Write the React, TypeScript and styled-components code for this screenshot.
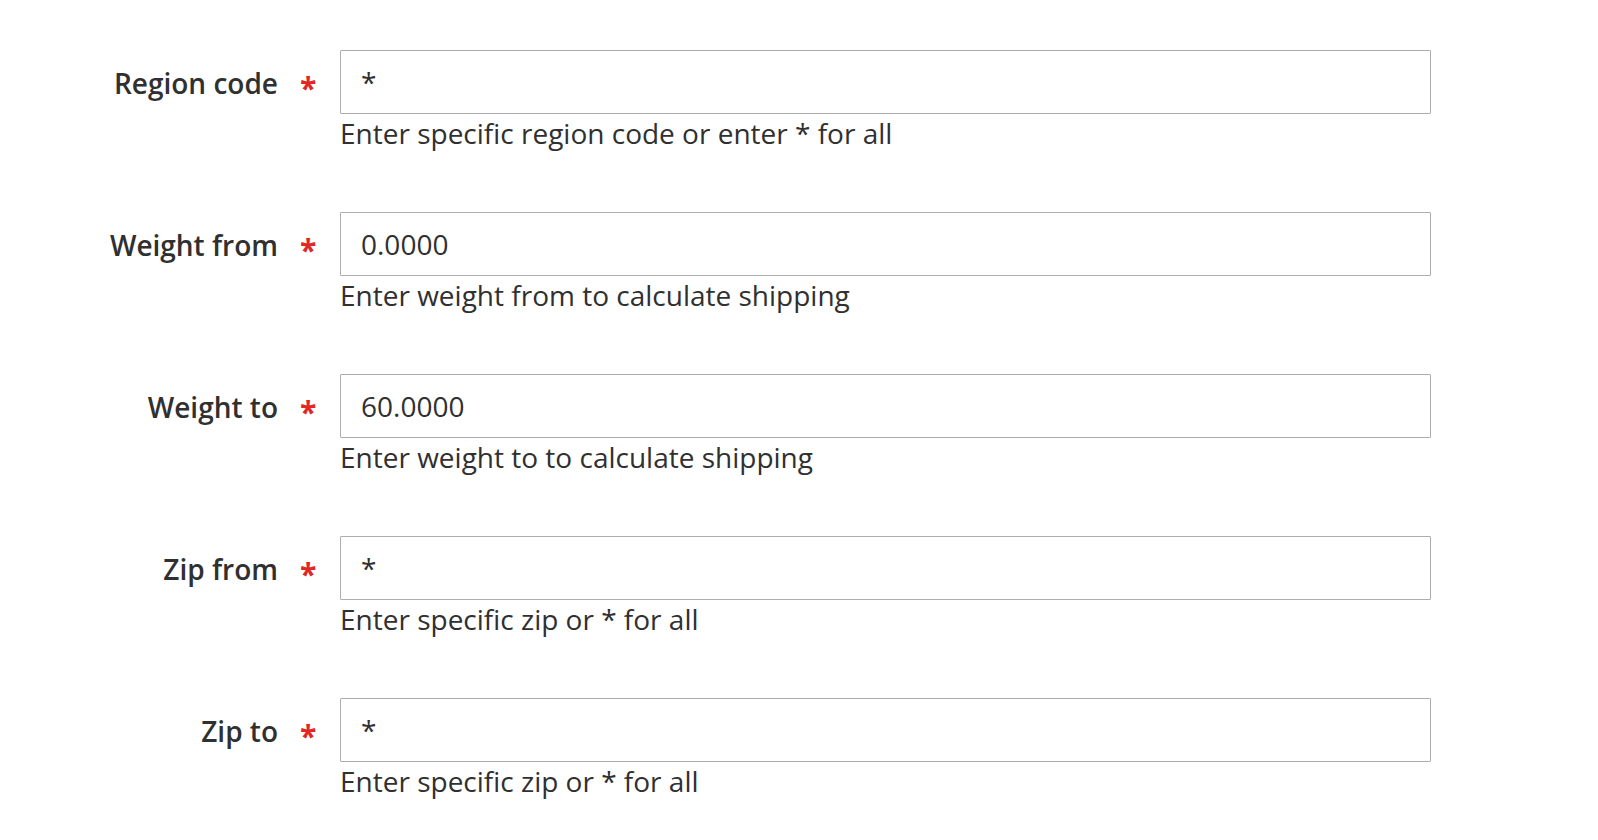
import React from 'react'
import styled, { createGlobalStyle } from 'styled-components'

const GlobalStyle = createGlobalStyle`
  html, body {
    margin: 0;
    padding: 0;
    background: #ffffff;
  }
  body {
    font-family: "Open Sans", "Noto Sans", sans-serif;
    color: #303030;
  }
`

type FieldProps = {
    label: string
    value: string
    note: string
}

const fields: FieldProps[] = [
    { label: 'Region code', value: '*', note: 'Enter specific region code or enter * for all' },
    { label: 'Weight from', value: '0.0000', note: 'Enter weight from to calculate shipping' },
    { label: 'Weight to', value: '60.0000', note: 'Enter weight to to calculate shipping' },
    { label: 'Zip from', value: '*', note: 'Enter specific zip or * for all' },
    { label: 'Zip to', value: '*', note: 'Enter specific zip or * for all' },
]

const Field = ({ label, value, note }: FieldProps) => {
  return (
    <Row>
        <Label>{label}</Label>
        <Control>
            <Input defaultValue={value} />
            <Note>{note}</Note>
        </Control>
    </Row>
  )
}

const App = () => {
  return (
    <Page>
        <GlobalStyle />
        <Form>
            {fields.map((f) => (
                <Field key={f.label} {...f} />
            ))}
        </Form>
    </Page>
  )
}

const Page = styled.div`
    padding-top: 50px;
    min-height: 840px;
    box-sizing: border-box;
`
const Form = styled.div`
    display: flex;
    flex-direction: column;
    gap: 59px;
`
const Row = styled.div`
    display: grid;
    grid-template-columns: 340px 1091px;
    align-items: start;
`
const Label = styled.label`
    display: flex;
    justify-content: flex-end;
    align-items: center;
    height: 64px;
    padding: 2px 0 0;
    box-sizing: border-box;
    font-size: 28px;
    font-weight: 600;
    color: #303030;
    white-space: nowrap;

    &::after {
        content: '*';
        color: #e22626;
        font-size: 30px;
        font-weight: 700;
        margin: 8px 22px 0 22px;
        width: 18px;
    }
`
const Control = styled.div`
    display: flex;
    flex-direction: column;
`
const Input = styled.input`
    height: 64px;
    box-sizing: border-box;
    border: 1px solid #adadad;
    border-radius: 1px;
    padding: 0 20px;
    font-family: "Open Sans", "Noto Sans", sans-serif;
    font-size: 28px;
    color: #303030;
    background: #fff;
    outline: none;
`
const Note = styled.div`
    font-size: 28px;
    line-height: 39px;
    color: #303030;
`

export default App
